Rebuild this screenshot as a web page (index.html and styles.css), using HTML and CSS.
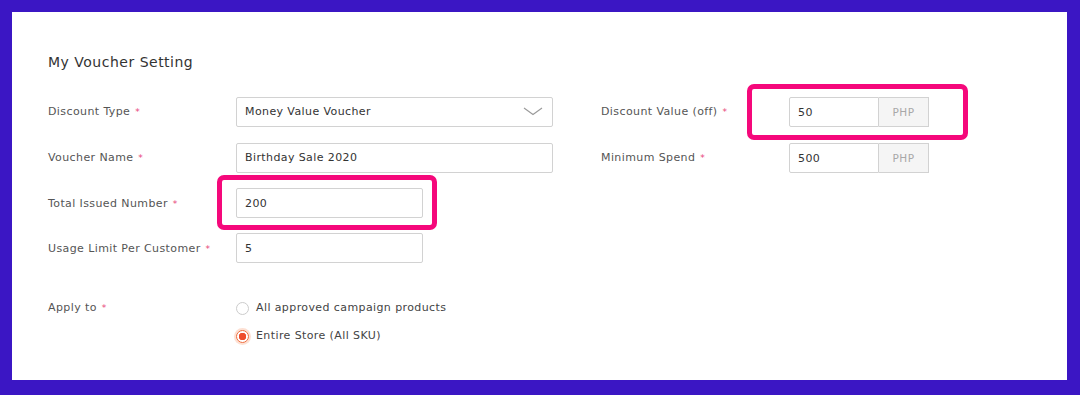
FILE: index.html
```html
<!doctype html>
<html lang="en">
<head>
    <meta charset="UTF-8">
    <meta name="viewport" content="width=device-width, initial-scale=1">
    <title>My Voucher Setting</title>
    <link rel="stylesheet" href="styles.css">
</head>
<body>
<div class="frame">
    <div class="panel">
        <h2 class="title">My Voucher Setting</h2>

        <div class="form-grid">
            <label class="label">Discount Type <span class="req">*</span></label>
            <div class="select">
                <span>Money Value Voucher</span>
                <svg width="20" height="9" viewBox="0 0 20 9"><path d="M1 1 L10 7.5 L19 1" fill="none" stroke="#9a9a9a" stroke-width="1.1"/></svg>
            </div>
            <label class="label label-right">Discount Value (off) <span class="req">*</span></label>
            <div class="money">
                <input type="text" value="50">
                <span class="addon">PHP</span>
            </div>

            <label class="label">Voucher Name <span class="req">*</span></label>
            <input class="field" type="text" value="Birthday Sale 2020">
            <label class="label label-right">Minimum Spend <span class="req">*</span></label>
            <div class="money">
                <input type="text" value="500">
                <span class="addon">PHP</span>
            </div>

            <label class="label">Total Issued Number <span class="req">*</span></label>
            <input class="field field-short" type="text" value="200">
            <div></div>
            <div></div>

            <label class="label">Usage Limit Per Customer <span class="req">*</span></label>
            <input class="field field-short" type="text" value="5">
            <div></div>
            <div></div>
        </div>

        <div class="apply">
            <div class="label">Apply to <span class="req">*</span></div>
            <div class="radios">
                <div class="radio"><span class="dot"></span>All approved campaign products</div>
                <div class="radio checked"><span class="dot"></span>Entire Store (All SKU)</div>
            </div>
        </div>

        <div class="highlight hl-discount"></div>
        <div class="highlight hl-issued"></div>
    </div>
</div>
</body>
</html>
```

FILE: styles.css
```css
body {
    margin: 0;
    padding: 0;
    font-family: "DejaVu Sans", Verdana, sans-serif;
    background: #3b16c4;
}

.frame {
    width: 1080px;
    height: 395px;
    padding: 12px 13px 15px 12px;
    box-sizing: border-box;
}

.panel {
    position: relative;
    background: #fff;
    height: 100%;
    padding: 41px 36px 0 36px;
    box-sizing: border-box;
}

.title {
    margin: 0 0 25px 0;
    font-size: 14px;
    font-weight: normal;
    letter-spacing: 0.5px;
    color: #333;
    line-height: 18px;
}

.form-grid {
    display: grid;
    grid-template-columns: 188px 317px 236px 140px;
    row-gap: 15px;
    align-items: center;
}

.label {
    font-size: 11px;
    letter-spacing: 0.4px;
    color: #555;
}

.label-right {
    padding-left: 48px;
}

.req {
    color: #e8477a;
    font-size: 9px;
    margin-left: 1px;
}

.field,
.money input,
.select {
    height: 30px;
    box-sizing: border-box;
    border: 1px solid #d2d2d2;
    border-radius: 2px;
    font-family: inherit;
    font-size: 11px;
    letter-spacing: 0.4px;
    color: #333;
    padding: 0 8px;
    background: #fff;
    outline: none;
}

.field {
    width: 317px;
}

.field-short {
    width: 187px;
}

.select {
    display: flex;
    align-items: center;
    justify-content: space-between;
    padding-right: 9px;
}

.money {
    display: flex;
    margin-top: 1px;
}

.money input {
    width: 90px;
    border-radius: 2px 0 0 2px;
}

.money .addon {
    width: 50px;
    height: 30px;
    box-sizing: border-box;
    border: 1px solid #d2d2d2;
    border-left: none;
    background: #f5f5f5;
    color: #a8a8a8;
    font-size: 10.5px;
    letter-spacing: 0.4px;
    display: flex;
    align-items: center;
    justify-content: center;
}

.apply {
    display: flex;
    margin-top: 37px;
}

.apply .label {
    width: 188px;
    line-height: 16px;
}

.radios {
    display: flex;
    flex-direction: column;
    gap: 12px;
}

.radio {
    display: flex;
    align-items: center;
    font-size: 11px;
    letter-spacing: 0.4px;
    color: #444;
    line-height: 16px;
}

.dot {
    width: 11px;
    height: 11px;
    border: 1px solid #ccc;
    border-radius: 50%;
    margin-right: 7px;
    box-sizing: content-box;
}

.radio.checked .dot {
    border-color: #ee6a3a;
    background: radial-gradient(circle, #ee4d2d 0 3.5px, #fff 4px);
    box-shadow: 0 0 0 2px #fde0d3;
}

.highlight {
    position: absolute;
    border: 5px solid #f5087b;
    border-radius: 7px;
    box-sizing: border-box;
}

.hl-discount {
    left: 735px;
    top: 72px;
    width: 221px;
    height: 56px;
}

.hl-issued {
    left: 205px;
    top: 163px;
    width: 220px;
    height: 55px;
}
```
